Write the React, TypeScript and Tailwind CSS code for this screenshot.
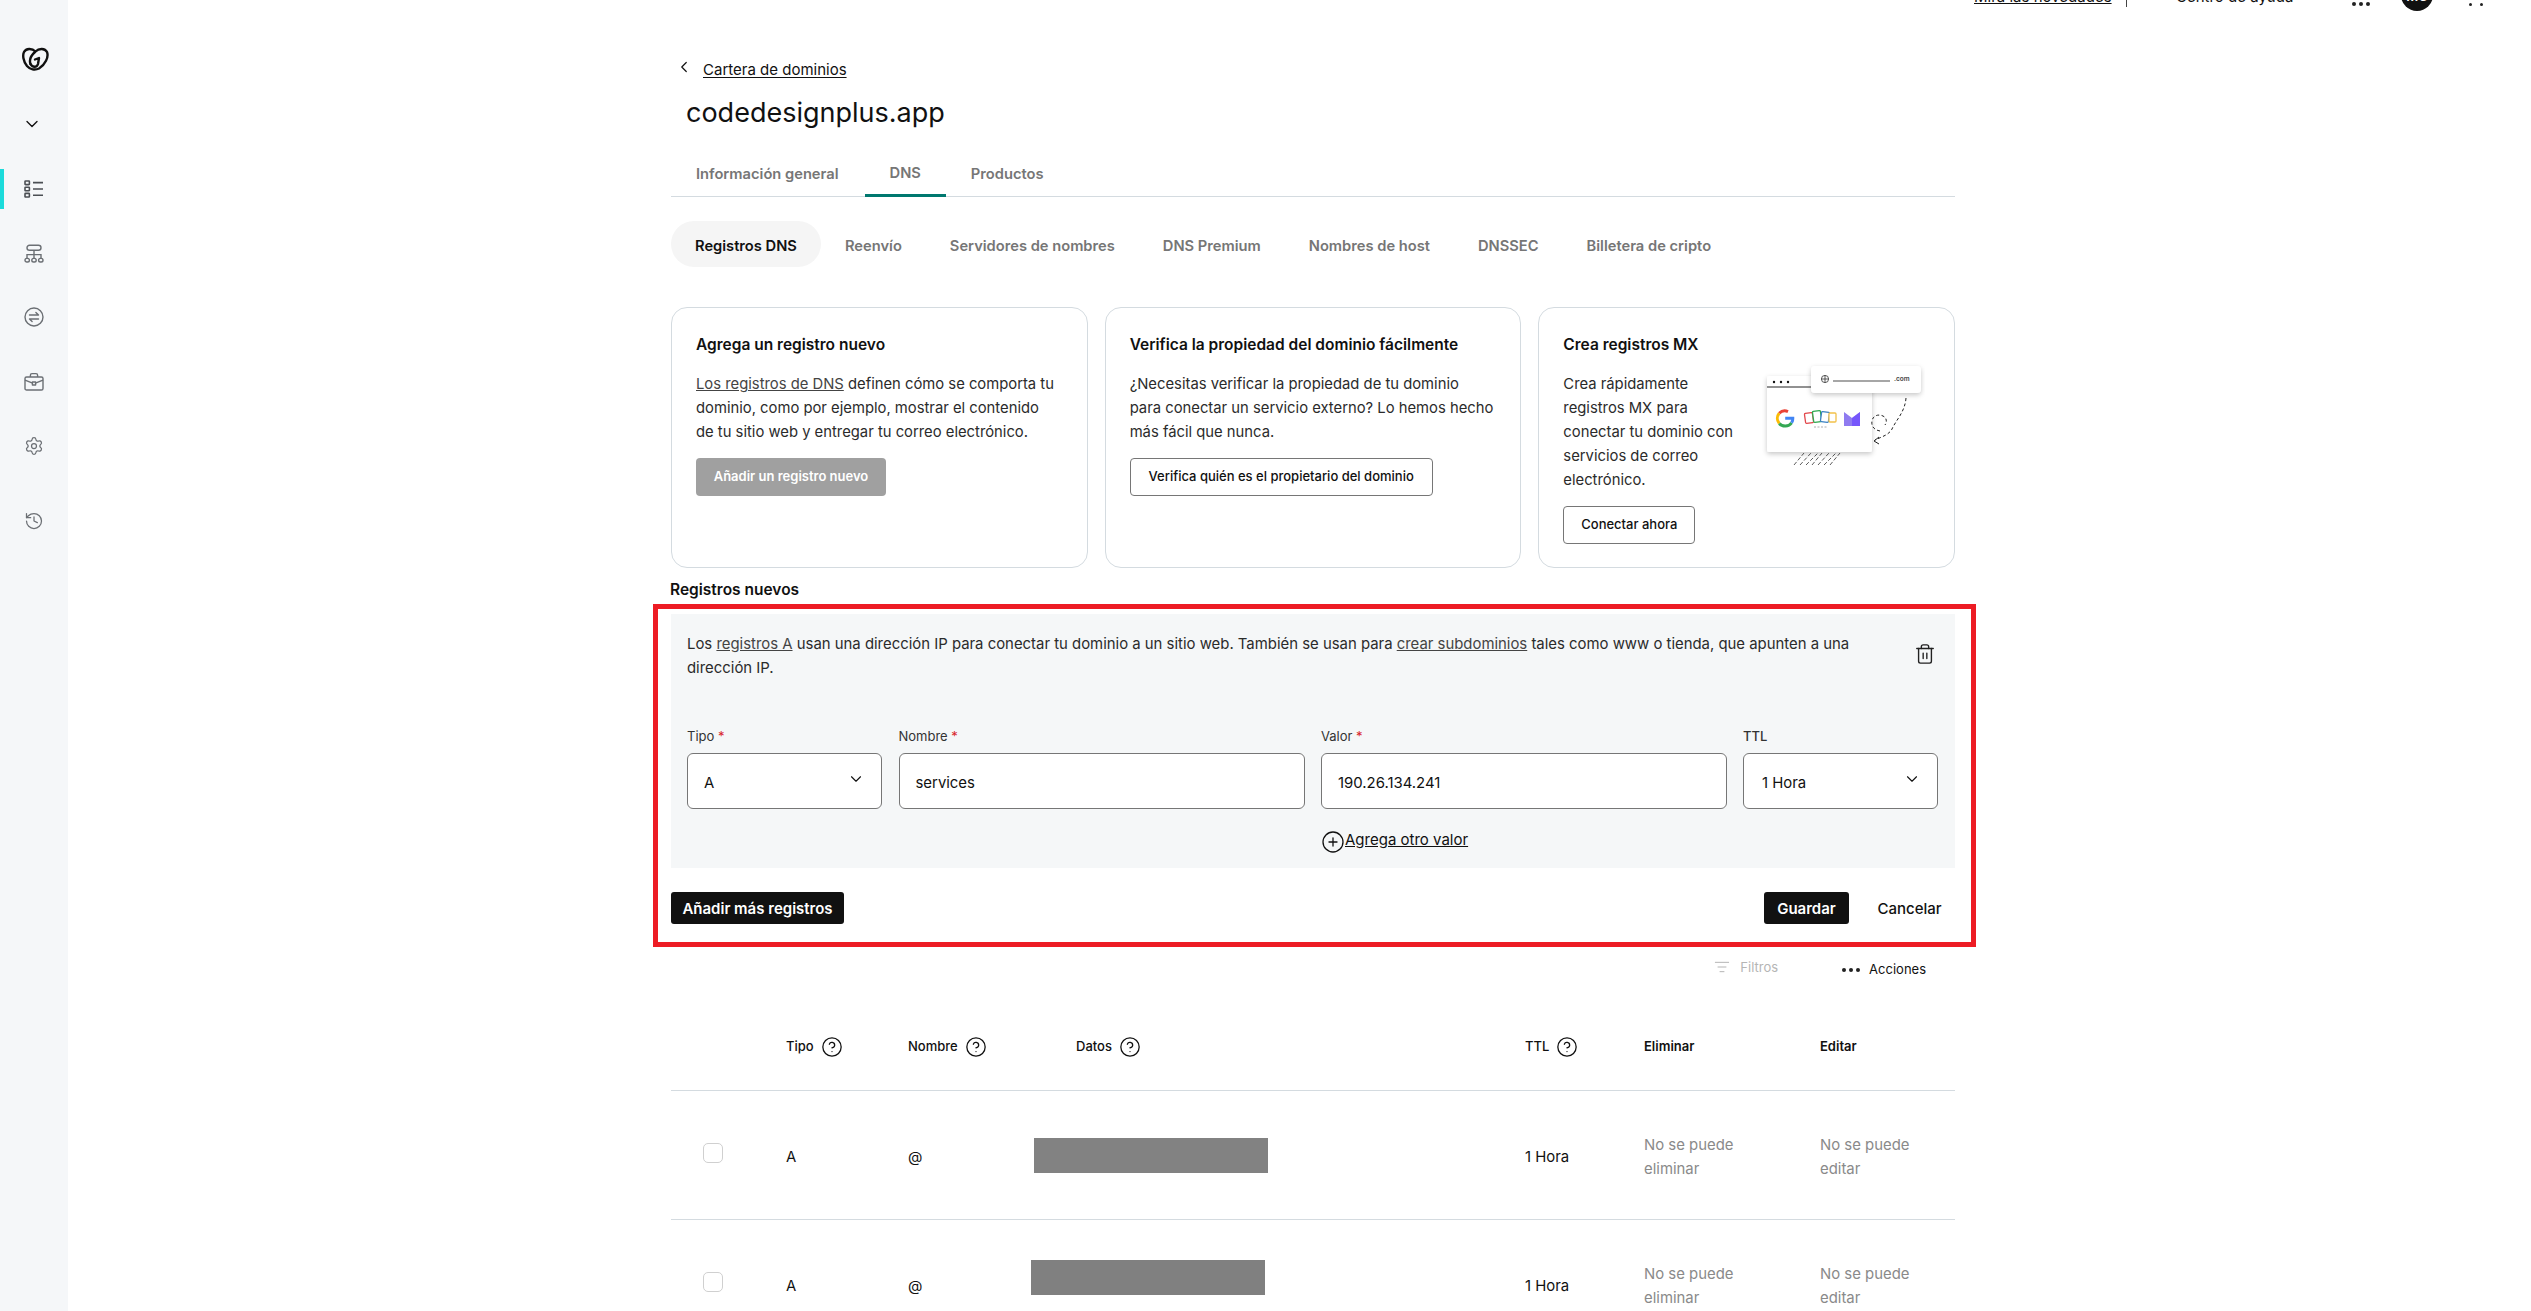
import { ChevronDown, ChevronLeft, CircleHelp, CirclePlus, History, ListFilter, Settings, Trash2 } from "lucide-react"

const GoDaddyLogo = () => (
  <svg width="27" height="24" viewBox="0 0 27 24" fill="none" stroke="#111" strokeWidth="2.4" strokeLinecap="round" strokeLinejoin="round">
    <path d="M13.500 4.500C17 1 23 1 25 5c2 5-2 13-8 16.500-4 2-9 1-12-2.500C1 14 .5 8 2 5c2-4 8-4 11.500-.5C9.500 8 7 13 8.500 17" />
    <path d="M8.500 17c2 4 6.500 3.500 7.500 0l1-6-4 1.500" />
  </svg>
)

const ListIcon = () => (
  <svg width="20" height="20" viewBox="0 0 20 20" fill="none" stroke="#4b4f54" strokeWidth="1.6">
    <rect x="1" y="2" width="4.4" height="3.6" rx=".6" />
    <rect x="1" y="8.2" width="4.4" height="3.6" rx=".6" />
    <rect x="1" y="14.4" width="4.4" height="3.6" rx=".6" />
    <path d="M9 3.600h10M9 10h10M9 16.200h10" />
  </svg>
)

const SitemapIcon = () => (
  <svg width="20" height="20" viewBox="0 0 20 20" fill="none" stroke="#6b6f74" strokeWidth="1.4">
    <rect x="3" y="1.200" width="14" height="5" rx="2.500" />
    <path d="M10 6.200v8M3 14v-3.400h14V14" />
    <rect x="1" y="14.400" width="4.400" height="3.600" rx="1.800" />
    <rect x="7.800" y="14.400" width="4.400" height="3.600" rx="1.800" />
    <rect x="14.600" y="14.400" width="4.400" height="3.600" rx="1.800" />
  </svg>
)

const SwapIcon = () => (
  <svg width="20" height="20" viewBox="0 0 20 20" fill="none" stroke="#6b6f74" strokeWidth="1.4" strokeLinecap="round" strokeLinejoin="round">
    <circle cx="10" cy="10" r="9" />
    <path d="M5.500 8h9l-2.600-2.600M14.500 12h-9l2.600 2.600" />
  </svg>
)

const BriefcaseIcon = () => (
  <svg width="20" height="20" viewBox="0 0 20 20" fill="none" stroke="#6b6f74" strokeWidth="1.4" strokeLinejoin="round">
    <rect x="1" y="5" width="18" height="13" rx="1.600" />
    <path d="M6.400 5V3.200c0-.9.700-1.600 1.600-1.600h4c.9 0 1.600.7 1.600 1.600V5M1 8.200l7.600 3M19 8.200l-7.600 3" />
    <rect x="8.400" y="10" width="3.200" height="3" />
  </svg>
)

const HelpIcon = () => <CircleHelp className="h-[22px] w-[22px] text-[#111]" strokeWidth={1.4} />

const MxIllustration = () => (
  <svg width="165" height="108" viewBox="0 0 165 108" className="mt-[28px] ml-[17px] shrink-0">
    <defs>
      <filter id="soft" x="-20%" y="-20%" width="140%" height="150%">
        <feDropShadow dx="0" dy="2" stdDeviation="2.500" floodColor="#000" floodOpacity="0.22" />
      </filter>
    </defs>
    <g stroke="#333" strokeWidth=".8">
      {[0, 1, 2, 3, 4, 5, 6].map((n) => (
        <path key={n} d={`M${34 + n * 6} 104l${10 + (n % 3)} -12`} strokeDasharray="4 2" />
      ))}
    </g>
    <rect x="7" y="15" width="105" height="76" rx="2" fill="#fff" filter="url(#soft)" />
    <path d="M7 26h105" stroke="#222" strokeWidth="1" />
    <circle cx="14" cy="21" r="1.200" fill="#111" />
    <circle cx="21" cy="21" r="1.200" fill="#111" />
    <circle cx="28" cy="21" r="1.200" fill="#111" />
    <path d="M28 50.600a8 8 0 0 0-8.800 1.600" fill="none" stroke="#ea4335" strokeWidth="3" />
    <path d="M19.200 52.200a8 8 0 0 0 0 10.200" fill="none" stroke="#fbbc05" strokeWidth="3" />
    <path d="M19.200 62.400a8 8 0 0 0 12.400-.6" fill="none" stroke="#34a853" strokeWidth="3" />
    <path d="M31.600 61.800a8 8 0 0 0 1.200-4.600h-7.600" fill="none" stroke="#4285f4" strokeWidth="3" />
    <g fill="#fff" strokeWidth="1.300">
      <rect x="45" y="52" width="8" height="10" rx="1" stroke="#e2474b" transform="rotate(-8 49 57)" />
      <rect x="53" y="50" width="8" height="11" rx="1" stroke="#2fa84f" transform="rotate(-8 57 55)" />
      <rect x="61" y="51" width="8" height="10" rx="1" stroke="#3b82c4" transform="rotate(8 65 56)" />
      <rect x="69" y="52" width="7" height="9" rx="1" stroke="#f2c14a" />
    </g>
    <path d="M54 66h14" stroke="#999" strokeWidth=".8" strokeDasharray="2 1.500" />
    <path d="M84 51l8 6 8-6v14H84z" fill="#8f7bf0" />
    <path d="M92 57l8-6v14h-8z" fill="#6d4aff" opacity=".75" />
    <rect x="51" y="5" width="110" height="27" rx="4" fill="#fff" filter="url(#soft)" />
    <g fill="none" stroke="#333" strokeWidth=".8">
      <circle cx="65" cy="18" r="3.600" />
      <path d="M61.400 18h7.200M65 14.400v7.200" />
    </g>
    <path d="M73 20h57" stroke="#888" strokeWidth="1.600" />
    <text x="134" y="20" fontSize="6.500" fontWeight="600" fill="#444">.com</text>
    <g fill="none" stroke="#222" strokeWidth="1" strokeDasharray="3 2.400">
      <path d="M146 37c-1 14-10 22-14 31-3 6-11 8-17 11" />
      <path d="M120 70c-6-1-9-5-8-10 1-6 7-7 11-5 4 2 4 6 2 9" />
      <path d="M119 76l-5 4 5 3" strokeDasharray="none" />
    </g>
  </svg>
)

const subTabs = ["Registros DNS", "Reenvío", "Servidores de nombres", "DNS Premium", "Nombres de host", "DNSSEC", "Billetera de cripto"]

const rows = [
  { rectClass: "ml-[5px] w-[234px] h-[35px] bg-[#828282]" },
  { rectClass: "ml-[2px] -mt-[14px] w-[234px] h-[35px] bg-[#808080]" },
]

export default function App() {
  return (
    <div className="flex h-[1311px] w-[2531px] overflow-hidden bg-white font-['Inter',sans-serif] text-[14.9px] text-[#111]">
      <aside className="w-[68px] shrink-0 bg-[#f5f7f9]">
        <div className="mt-[47px] ml-[22px]">
          <GoDaddyLogo />
        </div>
        <ChevronDown className="mt-[43px] ml-[22px] h-5 w-5 text-[#111]" strokeWidth={1.6} />
        <nav className="mt-[35px]">
          <div className="flex h-[40px] items-center border-l-4 border-[#1bdbdb] pl-[20px]">
            <ListIcon />
          </div>
          <div className="mt-[25px] flex h-[40px] items-center pl-[24px]">
            <SitemapIcon />
          </div>
          <div className="mt-[23px] flex h-[40px] items-center pl-[24px]">
            <SwapIcon />
          </div>
          <div className="mt-[25px] flex h-[40px] items-center pl-[24px]">
            <BriefcaseIcon />
          </div>
          <div className="mt-[24px] flex h-[40px] items-center pl-[24px]">
            <Settings className="h-5 w-5 text-[#6b6f74]" strokeWidth={1.5} />
          </div>
          <div className="mt-[35px] flex h-[40px] items-center pl-[24px]">
            <History className="h-5 w-5 text-[#6b6f74]" strokeWidth={1.5} />
          </div>
        </nav>
      </aside>

      <main className="min-w-0 flex-1">
        <div className="flex h-[12px] items-start overflow-hidden pl-[1906px]">
          <a className="-mt-[13px] w-[136px] text-[15px] leading-[20px] whitespace-nowrap underline">Mira las novedades</a>
          <span className="ml-[16px] h-[7px] w-px bg-[#444]" />
          <span className="-mt-[13px] ml-[49px] w-[116px] text-[15px] leading-[20px] whitespace-nowrap">Centro de ayuda</span>
          <span className="mt-[2px] ml-[60px] flex gap-[3px]">
            <i className="h-1 w-1 rounded-full bg-[#222]" />
            <i className="h-1 w-1 rounded-full bg-[#222]" />
            <i className="h-1 w-1 rounded-full bg-[#222]" />
          </span>
          <span className="-mt-[21px] ml-[31px] flex h-[32px] w-[32px] items-center justify-center rounded-full bg-[#111] pt-[4px] text-[13px] font-semibold text-white">MC</span>
          <span className="mt-[3px] ml-[36px] flex gap-[8px]">
            <i className="h-[3px] w-[3px] rounded-full bg-[#222]" />
            <i className="h-[3px] w-[3px] rounded-full bg-[#222]" />
          </span>
        </div>

        <div className="ml-[603px] w-[1284px]">
          <div className="mt-[48px] flex h-[20px] items-center pl-[4px]">
            <ChevronLeft className="-mt-[6px] h-[18px] w-[18px] text-[#111]" strokeWidth={1.6} />
            <a className="ml-[10px] text-[15px] underline underline-offset-2">Cartera de dominios</a>
          </div>
          <h1 className="mt-[13px] h-[40px] pl-[15px] text-[27px] leading-[40px] font-normal">codedesignplus.app</h1>

          <div className="mt-[20px] flex h-[44px] border-b-[1px] border-[#d4dbe0]">
            <button className="pr-[26px] pb-[1px] pl-[25px] text-[14.700px] font-semibold text-[#767676]">Información general</button>
            <button className="-mb-px border-b-[3px] border-[#00786f] px-[25px] pb-[1px] text-[14.700px] font-semibold text-[#767676]">DNS</button>
            <button className="px-[25px] pb-[1px] text-[14.700px] font-semibold text-[#767676]">Productos</button>
          </div>

          <div className="mt-[24px] flex h-[46px]">
            {subTabs.map((tab, i) => (
              <button
                key={tab}
                className={`rounded-[23px] px-[24px] pt-[4px] text-[14.700px] font-semibold ${i === 0 ? "bg-[#f5f5f5] text-[#111]" : "text-[#767676]"}`}
              >
                {tab}
              </button>
            ))}
          </div>

          <div className="mt-[40px] grid h-[261px] grid-cols-3 gap-[17px]">
            <div className="rounded-[16px] border border-[#d4dbe0] px-[24px] pt-[25px]">
              <h3 className="text-[15.500px] leading-[24px] font-semibold">Agrega un registro nuevo</h3>
              <p className="mt-[15px] w-[364px] text-[14.800px] leading-[24px] text-[#2b2b2b]">
                <a className="text-[#444] underline">Los registros de DNS</a> definen cómo se comporta tu dominio, como por ejemplo, mostrar el contenido de tu sitio web y entregar tu correo electrónico.
              </p>
              <button className="mt-[14px] h-[38px] w-[190px] rounded-[4px] bg-[#a0a0a0] text-[13px] font-semibold text-white">Añadir un registro nuevo</button>
            </div>
            <div className="rounded-[16px] border border-[#d4dbe0] px-[24px] pt-[25px]">
              <h3 className="text-[15.500px] leading-[24px] font-semibold">Verifica la propiedad del dominio fácilmente</h3>
              <p className="mt-[15px] w-[364px] text-[14.800px] leading-[24px] text-[#2b2b2b]">¿Necesitas verificar la propiedad de tu dominio para conectar un servicio externo? Lo hemos hecho más fácil que nunca.</p>
              <button className="mt-[14px] h-[38px] w-[303px] rounded-[4px] border border-[#767676] text-[13px] font-medium">Verifica quién es el propietario del dominio</button>
            </div>
            <div className="flex rounded-[16px] border border-[#d4dbe0] pt-[25px] pl-[24px]">
              <div className="w-[180px] shrink-0">
                <h3 className="text-[15.500px] leading-[24px] font-semibold">Crea registros MX</h3>
                <p className="mt-[15px] text-[14.800px] leading-[24px] text-[#2b2b2b]">Crea rápidamente registros MX para conectar tu dominio con servicios de correo electrónico.</p>
                <button className="mt-[14px] h-[38px] w-[132px] rounded-[4px] border border-[#767676] text-[13px] font-medium">Conectar ahora</button>
              </div>
              <MxIllustration />
            </div>
          </div>

          <h2 className="mt-[10px] -ml-px h-[24px] text-[15.500px] leading-[24px] font-semibold">Registros nuevos</h2>

          <div className="relative mt-[12px]">
            <div className="absolute -top-[10px] -right-[21px] -left-[18px] h-[343px] border-[5px] border-[#ed1c24]" />
            <div className="h-[254px] bg-[#f5f7f8] pt-[18px] pl-[16px]">
              <div className="flex justify-between pr-[19px]">
                <p className="w-[1180px] leading-[24px] text-[#2b2b2b]">
                  Los <a className="text-[#444] underline">registros A</a> usan una dirección IP para conectar tu dominio a un sitio web. También se usan para <a className="text-[#444] underline">crear subdominios</a> tales como www o tienda, que apunten a una dirección IP.
                </p>
                <Trash2 className="mt-[11px] h-[22px] w-[22px] text-[#222]" strokeWidth={1.5} />
              </div>
              <div className="mt-[46px] grid grid-cols-[195px_406px_405.5px_194.5px] gap-x-[16.5px]">
                <label className="h-[20px] text-[13px] leading-[20px] text-[#333]">
                  Tipo <span className="text-[#d8232a]">*</span>
                </label>
                <label className="h-[20px] text-[13px] leading-[20px] text-[#333]">
                  Nombre <span className="text-[#d8232a]">*</span>
                </label>
                <label className="h-[20px] text-[13px] leading-[20px] text-[#333]">
                  Valor <span className="text-[#d8232a]">*</span>
                </label>
                <label className="h-[20px] text-[13px] leading-[20px] font-medium text-[#333]">TTL</label>
                <div className="mt-[7px] flex h-[56px] items-center justify-between rounded-[6px] border border-[#767676] bg-white pr-[16px] pl-[16px]">
                  <span className="mt-[5px]">A</span>
                  <ChevronDown className="-mt-[4px] h-[18px] w-[18px]" strokeWidth={1.5} />
                </div>
                <div className="mt-[7px] flex h-[56px] items-center rounded-[6px] border border-[#767676] bg-white pl-[16px]">
                  <span className="mt-[5px]">services</span>
                </div>
                <div className="mt-[7px] flex h-[56px] items-center rounded-[6px] border border-[#767676] bg-white pl-[16px]">
                  <span className="mt-[5px]">190.26.134.241</span>
                </div>
                <div className="mt-[7px] flex h-[56px] items-center justify-between rounded-[6px] border border-[#767676] bg-white pr-[16px] pl-[18px]">
                  <span className="mt-[5px]">1 Hora</span>
                  <ChevronDown className="-mt-[4px] h-[18px] w-[18px]" strokeWidth={1.5} />
                </div>
                <div className="col-start-3 mt-[21px] flex h-[24px] items-start">
                  <CirclePlus className="h-6 w-6 shrink-0" strokeWidth={1.3} />
                  <a className="text-[15px] leading-[20px] underline">Agrega otro valor</a>
                </div>
              </div>
            </div>

            <div className="mt-[24px] flex justify-between">
              <button className="h-[32px] w-[173px] rounded-[3px] bg-[#111] pt-[2px] text-[15px] font-semibold text-white">Añadir más registros</button>
              <div className="flex">
                <button className="h-[32px] w-[85px] rounded-[3px] bg-[#111] pt-[2px] text-[15px] font-semibold text-white">Guardar</button>
                <button className="ml-[15px] h-[32px] w-[91px] pt-[2px] text-[15px] font-medium">Cancelar</button>
              </div>
            </div>
          </div>

          <div className="mt-[36px] flex h-[20px] items-center justify-end pr-[29px]">
            <ListFilter className="-mt-[6px] h-[16px] w-[16px] text-[#b5b5b5]" strokeWidth={1.5} />
            <span className="-mt-[5px] ml-[10px] text-[13px] text-[#b5b5b5]">Filtros</span>
            <span className="ml-[64px] flex gap-[3px]">
              <i className="h-[4px] w-[4px] rounded-full bg-[#222]" />
              <i className="h-[4px] w-[4px] rounded-full bg-[#222]" />
              <i className="h-[4px] w-[4px] rounded-full bg-[#222]" />
            </span>
            <span className="ml-[9px] text-[13px]">Acciones</span>
          </div>

          <div className="mt-[22px] grid h-[89px] grid-cols-[115px_122px_121px_496px_119px_176px_135px] items-center border-b border-[#d4dbe0] pt-[1px] text-[13px] font-medium">
            <span />
            <span className="flex items-center gap-[7px]">
              Tipo <HelpIcon />
            </span>
            <span className="flex items-center gap-[7px]">
              Nombre <HelpIcon />
            </span>
            <span className="flex items-center gap-[7px] pl-[47px]">
              Datos <HelpIcon />
            </span>
            <span className="flex items-center gap-[7px]">
              TTL <HelpIcon />
            </span>
            <span className="font-semibold">Eliminar</span>
            <span className="font-semibold">Editar</span>
          </div>

          {rows.map((row, i) => (
            <div key={i} className="grid h-[129px] grid-cols-[115px_122px_121px_496px_119px_176px_135px] items-center border-b border-[#d4dbe0]">
              <span className="-mt-[4px] ml-[32px] h-[20px] w-[20px] rounded-[5px] border border-[#d0d0d0]" />
              <span className="mt-[4px]">A</span>
              <span className="mt-[4px]">@</span>
              <div className={row.rectClass} />
              <span className="mt-[4px]">1 Hora</span>
              <span className="mt-[3px] w-[110px] leading-[24px] text-[#8a8a8a]">No se puede eliminar</span>
              <span className="mt-[3px] w-[110px] leading-[24px] text-[#8a8a8a]">No se puede editar</span>
            </div>
          ))}
        </div>
      </main>
    </div>
  )
}
